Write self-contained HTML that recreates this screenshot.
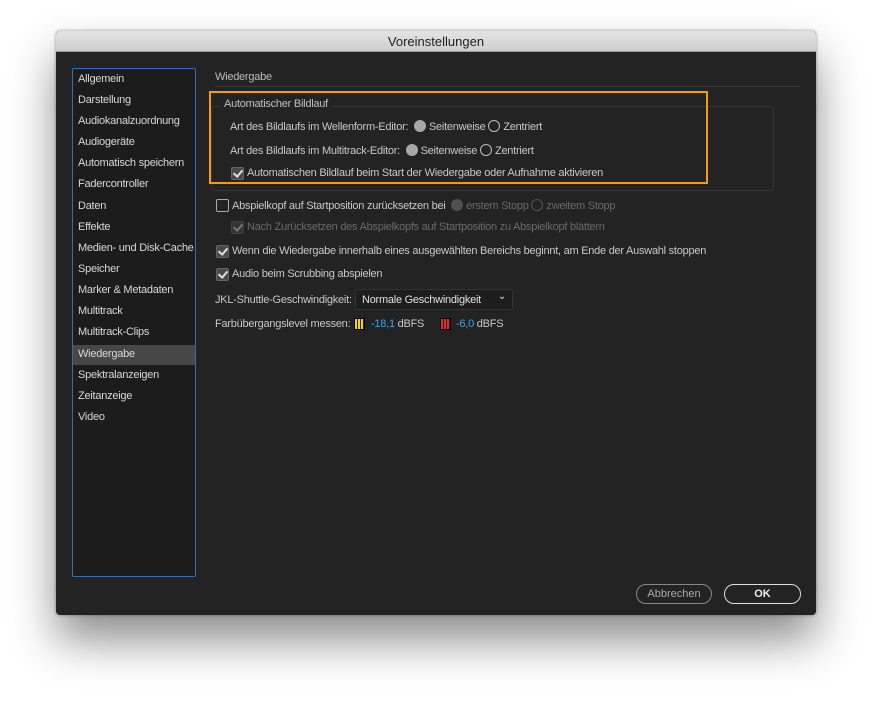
<!DOCTYPE html>
<html><head><meta charset="utf-8"><style>
*{margin:0;padding:0;box-sizing:border-box}
body{width:872px;height:718px;background:#fff;position:relative;overflow:hidden;font-family:"Liberation Sans",sans-serif;font-size:11px;letter-spacing:-0.25px;color:#c8c8c8}
.win{position:absolute;left:56px;top:31px;width:760px;height:584px;background:#232323;border-radius:4px;box-shadow:0 25px 45px rgba(0,0,0,.45),0 0 3px rgba(0,0,0,.4);overflow:hidden}
.title{position:absolute;left:0;top:0;width:760px;height:21px;background:linear-gradient(#e4e4e4,#cfcfcf);border-bottom:1px solid #999;text-align:center;color:#222;font-size:13px;letter-spacing:0;line-height:21px}
.a{position:absolute;white-space:nowrap}
.m{margin-top:1px}
.side{position:absolute;left:16px;top:37px;width:124px;height:509px;border:1px solid #2f6fb8;background:#1c1c1c;border-radius:2px}
.side .it{position:absolute;left:5px;color:#d8d8d8;white-space:nowrap}
.side .sel{position:absolute;left:0;top:276px;width:122px;height:20px;background:#474747}
.rad{display:inline-block;width:12px;height:12px;border-radius:50%;vertical-align:-2px;margin-right:3px}
.rf{background:#a8a8a8}
.ro{border:1.5px solid #bdbdbd}
.cb{position:absolute;width:13px;height:13px;border:1.5px solid #aaa;border-radius:2px}
.cb.c{background:#4a4a4a;border-color:#666}
.cb.c:after{content:"";position:absolute;left:3px;top:0px;width:4px;height:7px;border:solid #e0e0e0;border-width:0 2px 2px 0;transform:rotate(40deg)}
.dim{color:#6a6a6a}
.btn{position:absolute;height:20px;border-radius:10px;text-align:center;line-height:18px;letter-spacing:0}
</style></head><body>
<div class="win">
<div class="title">Voreinstellungen</div>
<div class="side">
<div class="sel"></div>
<div class="it" style="top:4px">Allgemein</div>
<div class="it" style="top:25px">Darstellung</div>
<div class="it" style="top:46px">Audiokanalzuordnung</div>
<div class="it" style="top:67px">Audiogeräte</div>
<div class="it" style="top:88px">Automatisch speichern</div>
<div class="it" style="top:109px">Fadercontroller</div>
<div class="it" style="top:131px">Daten</div>
<div class="it" style="top:152px">Effekte</div>
<div class="it" style="top:173px">Medien- und Disk-Cache</div>
<div class="it" style="top:194px">Speicher</div>
<div class="it" style="top:215px">Marker &amp; Metadaten</div>
<div class="it" style="top:236px">Multitrack</div>
<div class="it" style="top:257px">Multitrack-Clips</div>
<div class="it" style="top:279px">Wiedergabe</div>
<div class="it" style="top:300px">Spektralanzeigen</div>
<div class="it" style="top:321px">Zeitanzeige</div>
<div class="it" style="top:342px">Video</div>
</div>
<div class="a" style="left:159px;top:40px;color:#bbb">Wiedergabe</div>
<div class="a" style="left:159px;top:55px;width:585px;height:1px;background:#383838"></div>
<div class="a" style="left:155px;top:75px;width:563px;height:85px;border:1px solid #363636;border-radius:3px"></div>
<div class="a" style="left:165px;top:67px;background:#232323;padding:0 3px;color:#c0c0c0">Automatischer Bildlauf</div>
<div class="a" style="left:174px;top:89px">Art des Bildlaufs im Wellenform-Editor: &nbsp;<span class="rad rf"></span>Seitenweise <span class="rad ro"></span>Zentriert</div>
<div class="a" style="left:174px;top:113px">Art des Bildlaufs im Multitrack-Editor: &nbsp;<span class="rad rf"></span>Seitenweise <span class="rad ro"></span>Zentriert</div>
<div class="cb c" style="left:175px;top:136px"></div>
<div class="a" style="left:191px;top:136px">Automatischen Bildlauf beim Start der Wiedergabe oder Aufnahme aktivieren</div>
<div class="a" style="left:153px;top:60px;width:499px;height:93px;border:2px solid #f39c12"></div>
<div class="cb" style="left:160px;top:168px"></div>
<div class="a" style="left:176px;top:168px">Abspielkopf auf Startposition zurücksetzen bei &nbsp;<span class="dim"><span class="rad" style="background:#505050"></span>erstem Stopp <span class="rad" style="border:1.5px solid #555"></span>zweitem Stopp</span></div>
<div class="cb c" style="left:175px;top:190px;opacity:.45"></div>
<div class="a dim" style="left:191px;top:190px">Nach Zurücksetzen des Abspielkopfs auf Startposition zu Abspielkopf blättern</div>
<div class="cb c" style="left:160px;top:214px"></div>
<div class="a" style="left:176px;top:214px">Wenn die Wiedergabe innerhalb eines ausgewählten Bereichs beginnt, am Ende der Auswahl stoppen</div>
<div class="cb c" style="left:160px;top:237px"></div>
<div class="a" style="left:176px;top:237px">Audio beim Scrubbing abspielen</div>
<div class="a" style="left:159px;top:263px">JKL-Shuttle-Geschwindigkeit:</div>
<div class="a" style="left:299px;top:258px;width:158px;height:21px;background:#1d1d1d;border:1px solid #333;border-radius:2px;padding:4px 0 0 6px;color:#e0e0e0">Normale Geschwindigkeit<span style="position:absolute;right:6px;top:1px;font-size:10px">&#8964;</span></div>
<div class="a" style="left:159px;top:287px">Farbübergangslevel messen:</div>
<div class="a" style="left:298px;top:287px;width:11px;height:12px;border:1px solid #000;background-image:repeating-linear-gradient(90deg,#f5d31b 0 2px,#222 2px 3px)"></div>
<div class="a" style="left:315px;top:287px"><span style="color:#3aa3f0">-18,1</span> dBFS</div>
<div class="a" style="left:384px;top:287px;width:11px;height:12px;border:1px solid #000;background-image:repeating-linear-gradient(90deg,#e8282c 0 2px,#222 2px 3px)"></div>
<div class="a" style="left:400px;top:287px"><span style="color:#3aa3f0">-6,0</span> dBFS</div>
<div class="btn" style="left:580px;top:553px;width:76px;border:1.5px solid #888;color:#aaa">Abbrechen</div>
<div class="btn" style="left:668px;top:553px;width:77px;border:1.5px solid #ddd;color:#eee;font-weight:bold">OK</div>
</div>
</body></html>
